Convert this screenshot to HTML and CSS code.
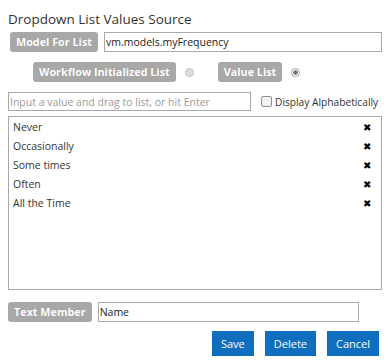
FILE: index.html
```html
<!DOCTYPE html>
<html lang="en">

<head>
    <meta charset="UTF-8">
    <meta name="viewport" content="width=device-width, initial-scale=1.0">
    <title>Dropdown List Values Source</title>
    <link rel="stylesheet" href="styles.css">
</head>

<body>
    <main class="panel">
        <h1 class="title">Dropdown List Values Source</h1>

        <div class="row model-row">
            <span class="badge">Model For List</span>
            <input type="text" class="field model-field" value="vm.models.myFrequency">
        </div>

        <div class="row source-row">
            <span class="badge">Workflow Initialized List</span>
            <span class="radio"></span>
            <span class="badge value-badge">Value List</span>
            <span class="radio checked"></span>
        </div>

        <div class="row add-row">
            <input type="text" class="field add-field" placeholder="Input a value and drag to list, or hit Enter">
            <label class="check-label"><span class="checkbox"></span>Display Alphabetically</label>
        </div>

        <ul class="value-list">
            <li><span>Never</span><span class="remove">&#x2716;</span></li>
            <li><span>Occasionally</span><span class="remove">&#x2716;</span></li>
            <li><span>Some times</span><span class="remove">&#x2716;</span></li>
            <li><span>Often</span><span class="remove">&#x2716;</span></li>
            <li><span>All the Time</span><span class="remove">&#x2716;</span></li>
        </ul>

        <div class="row member-row">
            <span class="badge">Text Member</span>
            <input type="text" class="field member-field" value="Name">
        </div>

        <div class="actions">
            <button type="button" class="btn">Save</button>
            <button type="button" class="btn">Delete</button>
            <button type="button" class="btn">Cancel</button>
        </div>
    </main>
</body>

</html>
```

FILE: styles.css
```css
body {
    margin: 0;
    font-family: "Open Sans", Arial, sans-serif;
    font-size: 10.5px;
    color: #333333;
    background-color: #ffffff;
}

.panel {
    width: 374px;
    padding: 9px 8px 0 8px;
}

.title {
    margin: 0;
    font-size: 13.5px;
    font-weight: normal;
    line-height: 20px;
    color: #333333;
}

.row {
    display: flex;
    align-items: center;
}

.badge {
    display: inline-block;
    height: 20px;
    line-height: 20px;
    padding: 0 6px;
    background-color: #a8a8a8;
    color: #ffffff;
    font-weight: bold;
    font-size: 10.8px;
    border-radius: 3px;
    text-shadow: 0 0 1px rgba(0, 0, 0, 0.15);
    white-space: nowrap;
}

.field {
    box-sizing: border-box;
    height: 20px;
    border: 1px solid #a9a9a9;
    padding: 0 1px;
    font-family: "Open Sans", Arial, sans-serif;
    font-size: 10.5px;
    color: #222222;
    outline: none;
}

.field::placeholder {
    color: #9a9a9a;
}

.model-row {
    margin-top: 3px;
    padding-left: 2px;
    gap: 6px;
}

.model-field {
    width: 281px;
}

.source-row {
    margin-top: 10px;
    padding-left: 25px;
}

.radio {
    width: 9px;
    height: 9px;
    margin-left: 9px;
    border: 1px solid #c4c4c4;
    border-radius: 50%;
    background-color: #dddddd;
    box-sizing: border-box;
}

.radio.checked {
    background-color: #ffffff;
    border-color: #a0a0a0;
    background-image: radial-gradient(circle, #777777 0, #777777 2px, transparent 2.5px);
}

.value-badge {
    margin-left: 24px;
}

.add-row {
    margin-top: 10px;
    gap: 10px;
}

.add-field {
    width: 243px;
    height: 19px;
}

.check-label {
    display: flex;
    align-items: center;
    gap: 3px;
    font-size: 10.2px;
    color: #333333;
    white-space: nowrap;
}

.checkbox {
    width: 9px;
    height: 9px;
    border: 1px solid #8f8f8f;
    border-radius: 2px;
    background-color: #f2f2f2;
}

.value-list {
    list-style: none;
    margin: 5px 0 0 0;
    padding: 1px 10px 0 4px;
    width: 358px;
    height: 171px;
    border: 1px solid #a9a9a9;
}

.value-list li {
    display: flex;
    justify-content: space-between;
    align-items: center;
    height: 19px;
    line-height: 19px;
}

.remove {
    font-size: 10px;
    color: #000000;
}

.member-row {
    margin-top: 12px;
    gap: 6px;
}

.member-field {
    width: 261px;
}

.actions {
    display: flex;
    justify-content: flex-end;
    gap: 11px;
    margin-top: 9px;
    padding-right: 3px;
}

.btn {
    height: 25px;
    padding: 0 9px;
    border: none;
    background-color: #106ebe;
    color: #ffffff;
    font-family: "Open Sans", Arial, sans-serif;
    font-size: 11px;
    cursor: pointer;
}
```
